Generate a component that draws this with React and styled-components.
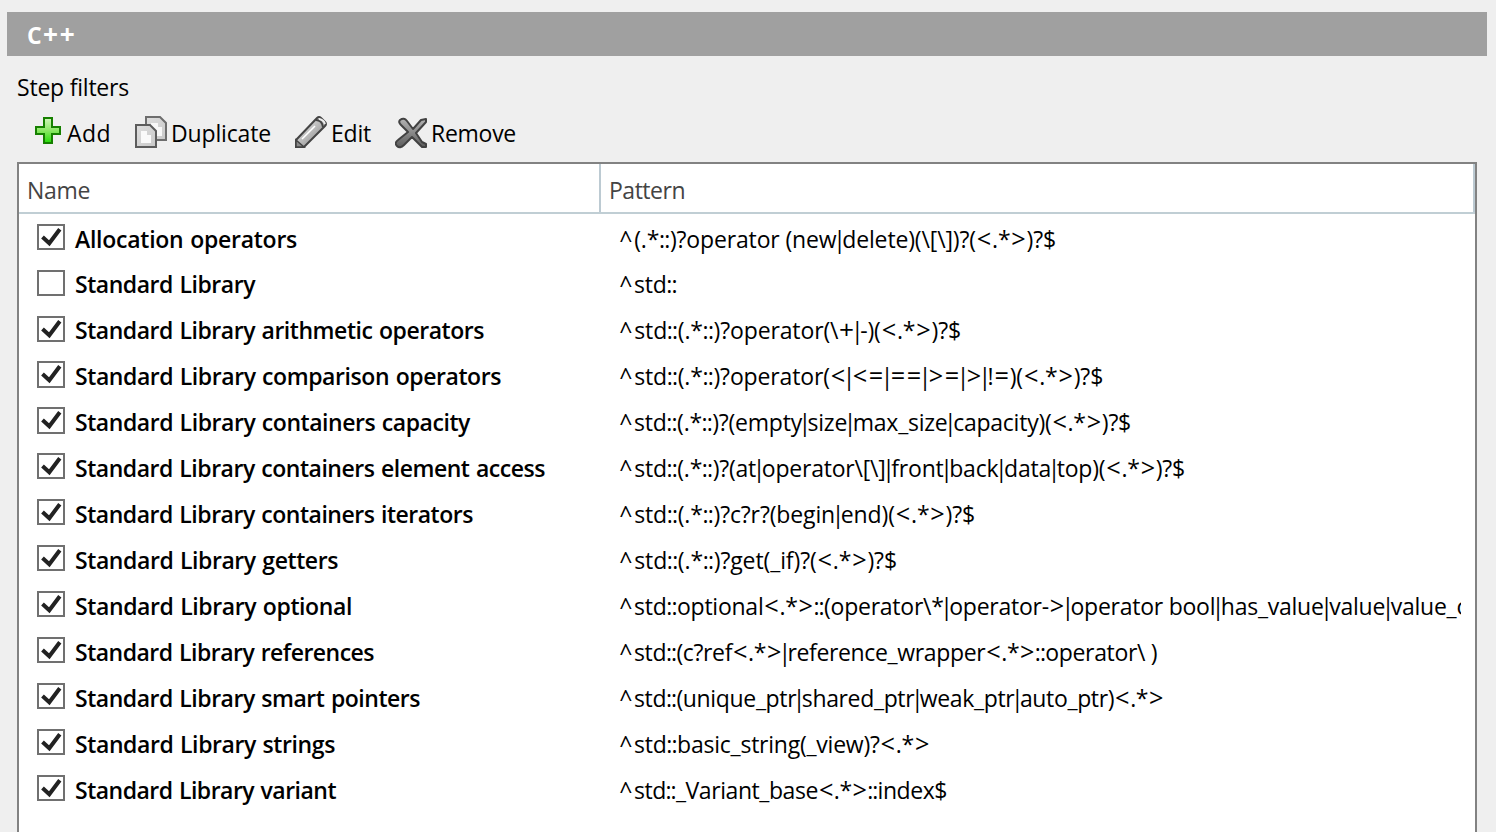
import React, { useLayoutEffect, useRef, useState } from 'react';
import styled, { createGlobalStyle } from 'styled-components';

const GlobalStyle = createGlobalStyle`
  body { margin: 0; background: #efefef; overflow: hidden; }
  * { box-sizing: border-box; }
`;

const Page = styled.main`
  width: 1496px;
  height: 832px;
  padding: 12px 9px 0 7px;
  overflow: hidden;
  display: flex;
  flex-direction: column;
  font-family: 'Open Sans', 'Noto Sans', sans-serif;
  font-size: 23px;
  color: #000;
`;

const TitleBar = styled.header`
  height: 44px;
  flex: none;
  padding-left: 20px;
  background: #a0a0a0;
  color: #fff;
  line-height: 46px;
  font-size: 23px;
  font-weight: 700;
`;

const Caption = styled.div`
  height: 55px;
  flex: none;
  padding: 15px 0 0 10px;
  line-height: 32px;
`;

const Toolbar = styled.div`
  height: 51px;
  flex: none;
  padding-left: 28px;
  display: flex;
`;

const ToolButton = styled.div`
  width: ${(p) => p.$width}px;
  display: flex;
  line-height: 44px;
  svg { flex: none; margin: -4px ${(p) => p.$gap}px 0 0; }
`;

const Table = styled.section`
  flex: none;
  height: 680px;
  margin: 0 10px;
  border: 2px solid #828282;
  background: #fff;
`;

const HeaderRow = styled.div`
  display: flex;
  height: 50px;
  border-bottom: 2px solid #c0ced4;
  color: #444;
`;

const HeaderCell = styled.div`
  width: ${(p) => p.$width}px;
  padding-left: 8px;
  border-right: 2px solid #bccad2;
  line-height: 52px;
`;

const Row = styled.div`
  display: flex;
  height: 46px;
  padding: 10px 0 0 18px;
  line-height: 32px;
  white-space: nowrap;
`;

const CheckBox = styled.span`
  flex: none;
  width: 28px;
  height: ${(p) => (p.$tall ? 27 : 26)}px;
  margin: ${(p) => (p.$raised ? -1 : 0)}px 10px 0 0;
  border: 2px solid #707070;
  background: #fff;
  svg { display: block; }
`;

const NameCell = styled.span`
  width: 544px;
  font-weight: 600;
  word-spacing: 1px;
  margin-top: ${(p) => (p.$first ? -1 : -2)}px;
`;

const PatternCell = styled.span`
  width: 842px;
  overflow: hidden;
  margin-top: ${(p) => (p.$first ? -1 : -2)}px;
`;

const Label = styled.span`
  display: inline-block;
  white-space: pre;
`;

const Glyph = styled.span`
  margin: 0 ${(p) => p.$right}px 0 ${(p) => p.$left}px;
  font-size: ${(p) => p.$scale}em;
  line-height: 0;
`;

const symbols = {
  '|': [-3.4, -3.4, 1],
  '<': [0.9, 0.9, 1.1],
  '>': [0.9, 0.9, 1.1],
  '=': [0.9, 0.9, 1.1],
  '+': [0.6, 0.6, 1.14],
  '^': [0.2, 2, 1],
  ':': [-0.3, -0.3, 1],
};

function Fit({ width, children }) {
  const ref = useRef(null);
  const [spacing, setSpacing] = useState(0);
  useLayoutEffect(() => {
    const natural = ref.current.getBoundingClientRect().width;
    setSpacing((width - natural) / children.length);
  }, []);
  const parts = children.split(/([|<>=+^:])/).filter(Boolean);
  return (
    <Label ref={ref} style={{ letterSpacing: spacing + 'px' }}>
      {parts.map((part, i) => {
        const s = symbols[part];
        return s ? <Glyph key={i} $left={s[0]} $right={s[1]} $scale={s[2]}>{part}</Glyph> : part;
      })}
    </Label>
  );
}

const AddIcon = () => (
  <svg width="28" height="44" viewBox="0 0 28 44">
    <defs>
      <linearGradient id="plus" x1="0" y1="0" x2="0" y2="1">
        <stop offset="0" stopColor="#d2f5bd" />
        <stop offset="0.5" stopColor="#8be765" />
        <stop offset="1" stopColor="#22dc05" />
      </linearGradient>
    </defs>
    <path d="M9 11h8v9h8v7h-8v9H9v-9H1v-7h8z" fill="url(#plus)" stroke="#168000" strokeWidth="2" />
  </svg>
);

const DuplicateIcon = () => (
  <svg width="32" height="44" viewBox="0 0 32 44">
    <defs>
      <linearGradient id="sheet" x1="0" y1="0" x2="1" y2="1">
        <stop offset="0" stopColor="#dedede" />
        <stop offset="1" stopColor="#c9c9c9" />
      </linearGradient>
    </defs>
    <path d="M11 10h14l6 6v17H11z" fill="url(#sheet)" stroke="#6d6d6d" strokeWidth="2" />
    <path d="M16 16h7v4h4v9H16z" fill="#f8f8f8" />
    <path d="M1 18h14l6 6v16H1z" fill="url(#sheet)" stroke="#5c5c5c" strokeWidth="2" />
    <path d="M6 24h6v4h4v8H6z" fill="#fafafa" />
  </svg>
);

const EditIcon = () => (
  <svg width="32" height="44" viewBox="0 0 32 44">
    <defs>
      <linearGradient id="barrel" x1="0" y1="0" x2="1" y2="1">
        <stop offset="0.25" stopColor="#dadada" />
        <stop offset="0.75" stopColor="#9a9a9a" />
      </linearGradient>
    </defs>
    <path d="M1 33L22 11q2-2 4 0l4 4q2 2 0 4L9 40H1z" fill="url(#barrel)" stroke="#444" strokeWidth="2" />
    <path d="M1 33l8 7H1z" fill="#8a8a8a" stroke="#444" strokeWidth="1.5" />
    <path d="M7 32L20 19" stroke="#fff" strokeWidth="1.6" />
    <path d="M21 13q6 0 7 7" fill="none" stroke="#444" strokeWidth="2" />
    <path d="M24 12q5 1 6 5" fill="none" stroke="#eee" strokeWidth="1.8" />
  </svg>
);

const RemoveIcon = () => (
  <svg width="32" height="44" viewBox="0 0 32 44">
    <defs>
      <linearGradient id="cross" x1="0" y1="0" x2="0" y2="1">
        <stop offset="0" stopColor="#b4b4b4" />
        <stop offset="1" stopColor="#5c5c5c" />
      </linearGradient>
    </defs>
    <path d="M5 13q4-3 7 1l6 8 8-9 5-1v3L21 26l6 9 4 2v3h-4l-10-10-8 8q-4 4-7 1-3-3 1-6l10-8-7-7q-3-3-1-5z" fill="url(#cross)" stroke="#424242" strokeWidth="2" strokeLinejoin="round" />
  </svg>
);

const rows = [
  ['Allocation operators', 222, '^(.*::)?operator (new|delete)(\\[\\])?(<.*>)?$', 437, true],
  ['Standard Library', 180, '^std::', 58, false],
  ['Standard Library arithmetic operators', 409, '^std::(.*::)?operator(\\+|-)(<.*>)?$', 342, true],
  ['Standard Library comparison operators', 426, '^std::(.*::)?operator(<|<=|==|>=|>|!=)(<.*>)?$', 484, true],
  ['Standard Library containers capacity', 395, '^std::(.*::)?(empty|size|max_size|capacity)(<.*>)?$', 512, true],
  ['Standard Library containers element access', 470, '^std::(.*::)?(at|operator\\[\\]|front|back|data|top)(<.*>)?$', 566, true],
  ['Standard Library containers iterators', 398, '^std::(.*::)?c?r?(begin|end)(<.*>)?$', 356, true],
  ['Standard Library getters', 263, '^std::(.*::)?get(_if)?(<.*>)?$', 278, true],
  ['Standard Library optional', 277, '^std::optional<.*>::(operator\\*|operator->|operator bool|has_value|value|value_o', 851, true],
  ['Standard Library references', 299, '^std::(c?ref<.*>|reference_wrapper<.*>::operator\\ )', 538, true],
  ['Standard Library smart pointers', 345, '^std::(unique_ptr|shared_ptr|weak_ptr|auto_ptr)<.*>', 545, true],
  ['Standard Library strings', 260, '^std::basic_string(_view)?<.*>', 311, true],
  ['Standard Library variant', 261, '^std::_Variant_base<.*>::index$', 328, true],
];

export default function App() {
  return (
    <>
      <GlobalStyle />
      <Page>
        <TitleBar><Fit width={49}>C++</Fit></TitleBar>
        <Caption><Fit width={112}>Step filters</Fit></Caption>
        <Toolbar>
          <ToolButton $width={100} $gap={4}><AddIcon /><Fit width={44}>Add</Fit></ToolButton>
          <ToolButton $width={160} $gap={4}><DuplicateIcon /><Fit width={100}>Duplicate</Fit></ToolButton>
          <ToolButton $width={100} $gap={4}><EditIcon /><Fit width={40}>Edit</Fit></ToolButton>
          <ToolButton $width={140} $gap={4}><RemoveIcon /><Fit width={85}>Remove</Fit></ToolButton>
        </Toolbar>
        <Table>
          <HeaderRow>
            <HeaderCell $width={582}><Fit width={63}>Name</Fit></HeaderCell>
            <HeaderCell $width={874}><Fit width={76}>Pattern</Fit></HeaderCell>
          </HeaderRow>
          {rows.map(([name, nameWidth, pattern, patternWidth, checked], i) => (
            <Row key={name}>
              <CheckBox $raised={i > 2} $tall={i === 3 || i === 4}>
                {checked && (
                  <svg width="24" height="22" viewBox="0 0 24 22">
                    <path d="M3.5 11l6.8 6.2L20.8 3.2" fill="none" stroke="#222" strokeWidth="4" />
                  </svg>
                )}
              </CheckBox>
              <NameCell $first={i === 0}><Fit width={nameWidth}>{name}</Fit></NameCell>
              <PatternCell $first={i === 0}><Fit width={patternWidth}>{pattern}</Fit></PatternCell>
            </Row>
          ))}
        </Table>
      </Page>
    </>
  );
}
